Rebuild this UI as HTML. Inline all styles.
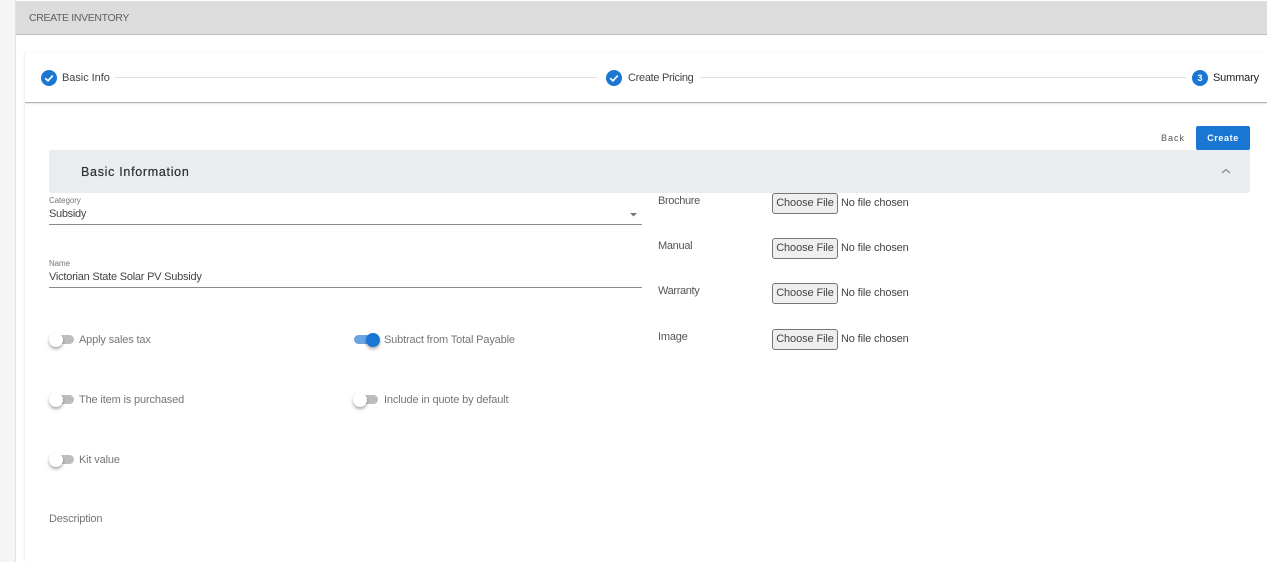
<!DOCTYPE html>
<html><head><meta charset="utf-8">
<style>
html,body{margin:0;padding:0;width:1267px;height:562px;overflow:hidden;background:#fff;font-family:"Liberation Sans",sans-serif}
div,span{position:absolute;white-space:nowrap}
.t{font-size:11px;line-height:14px;color:#444}
.lab{font-size:11px;line-height:14px;color:#757575;letter-spacing:-.15px}
.sm{font-size:8px;line-height:10px;color:#757575;letter-spacing:-.1px}
.line{height:1px;background:#e0e0e0;top:77px}
.ul{left:49px;width:593px;height:1px;background:#8a8a8a}
.track{width:21px;height:9px;border-radius:5px;background:#bdbdbd}
.knob{width:14px;height:14px;border-radius:50%;background:#fff;box-shadow:0 2px 3px rgba(0,0,0,.35)}
.btn{left:772px;width:64px;height:19px;border:1px solid #767676;border-radius:3px;background:#efefef;font-size:11px;line-height:19px;text-align:center;color:#444;letter-spacing:-.1px}
.nf{left:841px;font-size:11px;line-height:14px;color:#444;letter-spacing:-.15px}
.circ{width:16px;height:16px;border-radius:50%;background:#1976d2;top:70px}
</style></head><body>
<div style="left:0;top:0;width:16px;height:562px;background:#f5f5f5;border-right:1px solid #e3e3e3;box-sizing:border-box"></div>
<div style="left:16px;top:1px;width:1251px;height:33px;background:#dcdcdc;border-bottom:1px solid #bcbcbc"></div>
<div style="left:29px;top:11px;font-size:10.5px;line-height:14px;letter-spacing:-.35px;color:#5f5f5f">CREATE INVENTORY</div>

<div style="left:25px;top:53px;width:1242px;height:509px;background:#fff;box-shadow:-1px 0 2px rgba(0,0,0,.08)"></div>
<div style="left:25px;top:102px;width:1242px;height:1px;background:#b4b4b4;box-shadow:0 1px 1px rgba(0,0,0,.12)"></div>

<div class="circ" style="left:41px"><svg width="16" height="16" viewBox="0 0 16 16" style="position:absolute;left:0;top:0"><path d="M4.2 8.2L7 10.8L11.8 5.6" fill="none" stroke="#fff" stroke-width="1.7"/></svg></div>
<div class="t" style="left:62px;top:71px;letter-spacing:-.05px">Basic Info</div>
<div class="line" style="left:115px;width:482px"></div>
<div class="circ" style="left:606px"><svg width="16" height="16" viewBox="0 0 16 16" style="position:absolute;left:0;top:0"><path d="M4.2 8.2L7 10.8L11.8 5.6" fill="none" stroke="#fff" stroke-width="1.7"/></svg></div>
<div class="t" style="left:628px;top:71px;letter-spacing:-.3px">Create Pricing</div>
<div class="line" style="left:700px;width:486px"></div>
<div class="circ" style="left:1192px;color:#fff;font-size:9px;line-height:16px;text-align:center;font-weight:bold">3</div>
<div class="t" style="left:1213px;top:71px;color:#222;letter-spacing:-.15px">Summary</div>

<div style="left:1161px;top:131px;font-size:9px;line-height:14px;letter-spacing:1px;color:#555">Back</div>
<div style="left:1196px;top:126px;width:54px;height:24px;background:#1976d2;border-radius:2px;color:#fff;font-size:9px;font-weight:bold;letter-spacing:.6px;line-height:24px;text-align:center">Create</div>

<div style="left:49px;top:150px;width:1201px;height:43px;background:#eaedf0;border-radius:0 0 3px 3px"></div>
<div style="left:81px;top:165px;font-size:12.5px;line-height:15px;letter-spacing:.7px;color:#333;text-shadow:0 0 .5px #333">Basic Information</div>
<svg width="12" height="8" viewBox="0 0 12 8" style="position:absolute;left:1220px;top:167px"><path d="M2 6L6 2.5L10 6" fill="none" stroke="#888" stroke-width="1.2"/></svg>

<div class="sm" style="left:49px;top:196px">Category</div>
<div class="t" style="left:49px;top:207px;color:#444;letter-spacing:-.3px">Subsidy</div>
<svg width="7" height="4" style="position:absolute;left:630px;top:213px"><path d="M0 0H7L3.5 3.5Z" fill="#757575"/></svg>
<div class="ul" style="top:224px"></div>
<div class="sm" style="left:49px;top:259px">Name</div>
<div class="t" style="left:49px;top:270px;color:#444;letter-spacing:-.23px">Victorian State Solar PV Subsidy</div>
<div class="ul" style="top:287px"></div>

<div class="track" style="left:53px;top:335px"></div><div class="knob" style="left:49px;top:333px"></div>
<div class="lab" style="left:79px;top:333px">Apply sales tax</div>
<div class="track" style="left:354px;top:335px;background:#6ba4e3"></div><div class="knob" style="left:366px;top:333px;background:#1976d2"></div>
<div class="lab" style="left:384px;top:333px">Subtract from Total Payable</div>
<div class="track" style="left:53px;top:395px"></div><div class="knob" style="left:49px;top:393px"></div>
<div class="lab" style="left:79px;top:393px">The item is purchased</div>
<div class="track" style="left:357px;top:395px"></div><div class="knob" style="left:353px;top:393px"></div>
<div class="lab" style="left:384px;top:393px">Include in quote by default</div>
<div class="track" style="left:53px;top:455px"></div><div class="knob" style="left:49px;top:453px"></div>
<div class="lab" style="left:79px;top:453px">Kit value</div>
<div class="lab" style="left:49px;top:512px">Description</div>

<div class="t" style="left:658px;top:194px;color:#555;letter-spacing:-.35px">Brochure</div>
<div class="btn" style="top:193px">Choose File</div><div class="nf" style="top:196px">No file chosen</div>
<div class="t" style="left:658px;top:239px;color:#555;letter-spacing:-.3px">Manual</div>
<div class="btn" style="top:238px">Choose File</div><div class="nf" style="top:241px">No file chosen</div>
<div class="t" style="left:658px;top:284px;color:#555;letter-spacing:-.35px">Warranty</div>
<div class="btn" style="top:283px">Choose File</div><div class="nf" style="top:286px">No file chosen</div>
<div class="t" style="left:658px;top:330px;color:#555;letter-spacing:-.2px">Image</div>
<div class="btn" style="top:329px">Choose File</div><div class="nf" style="top:332px">No file chosen</div>
</body></html>
